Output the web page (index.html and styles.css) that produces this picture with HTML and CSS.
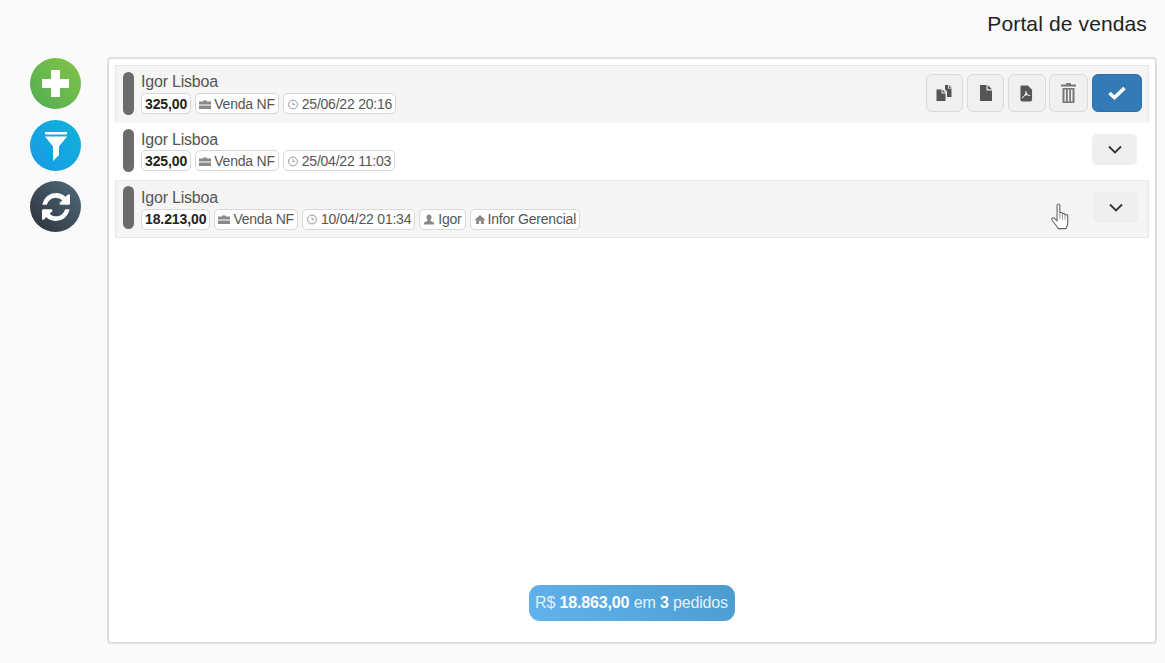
FILE: index.html
```html
<!DOCTYPE html>
<html lang="pt">
<head>
<meta charset="utf-8">
<title>Portal de vendas</title>
<link rel="stylesheet" href="styles.css">
</head>
<body>
<svg class="sprite" width="0" height="0" aria-hidden="true">
  <symbol id="i-case" viewBox="0 0 12 10"><path d="M4 2V1h4v1h4v3H0V2zM0 6h12v3.500H0z"/></symbol>
  <symbol id="i-clock" viewBox="0 0 12 12"><circle cx="6" cy="6" r="4.800" fill="none" stroke="currentColor" stroke-width="1"/><path d="M6 3.500V6h2" fill="none" stroke="currentColor" stroke-width="1"/></symbol>
  <symbol id="i-user" viewBox="0 0 12 12"><path d="M6 0.500c1.800 0 2.800 1.300 2.800 3.100 0 1.300-.6 2.400-1.300 3 0 .8.300 1 1 1.300 1.500.6 3 1 3 2.100v1.500H.5V10c0-1.100 1.500-1.500 3-2.100.7-.3 1-.5 1-1.300-.7-.6-1.300-1.700-1.300-3C3.200 1.800 4.200.5 6 .5z"/></symbol>
  <symbol id="i-home" viewBox="0 0 12 12"><path d="M6 1 0 6.500h1.800V11h3V7.500h2.400V11h3V6.500H12z"/></symbol>
  <symbol id="i-chevron" viewBox="0 0 14 9"><path d="M1 1.500 7 7.500l6-6" fill="none" stroke="currentColor" stroke-width="1.800"/></symbol>
</svg>

<header class="top">Portal de vendas</header>

<div class="main">
  <nav class="side">
    <button class="fab fab-green" aria-label="Adicionar">
      <svg width="27" height="27" viewBox="0 0 27 27"><path d="M9 0h9v9h9v9h-9v9H9v-9H0V9h9z" fill="#fff"/></svg>
    </button>
    <button class="fab fab-blue" aria-label="Filtrar">
      <svg width="22" height="29" viewBox="0 0 22 29"><path d="M0 0h22v2.500H0zM0 4.500h22l-8 10v8.500l-6 6V14.500z" fill="#fff"/></svg>
    </button>
    <button class="fab fab-dark" aria-label="Atualizar">
      <svg width="28" height="28" viewBox="128 128 1536 1536"><path d="M1639 1056q0 5-1 7-64 268-268 434.500t-478 166.500q-146 0-282.500-55t-243.500-157l-129 129q-19 19-45 19t-45-19-19-45v-448q0-26 19-45t45-19h448q26 0 45 19t19 45-19 45l-137 137q71 66 161 102t187 36q134 0 250-65t186-179q11-17 53-117 8-23 30-23h192q13 0 22.500 9.500t9.500 22.500zm25-800v448q0 26-19 45t-45 19h-448q-26 0-45-19t-19-45 19-45l138-138q-148-137-349-137-134 0-250 65t-186 179q-11 17-53 117-8 23-30 23h-199q-13 0-22.500-9.500t-9.500-22.500v-7q65-268 270-434.500t480-166.500q146 0 284 55.500t245 156.500l130-129q19-19 45-19t45 19 19 45z" fill="#fff"/></svg>
    </button>
  </nav>

  <section class="panel">
    <div class="row row-open">
      <span class="bar"></span>
      <div class="info">
        <div class="name">Igor Lisboa</div>
        <div class="tags">
          <span class="tag tag-value">325,00</span>
          <span class="tag"><svg class="ico"><use href="#i-case"/></svg>Venda NF</span>
          <span class="tag"><svg class="ico"><use href="#i-clock"/></svg>25/06/22 20:16</span>
        </div>
      </div>
      <div class="actions">
        <button class="act" aria-label="Duplicar"><svg width="16" height="16" viewBox="0 0 16 16"><path d="M9 0h3v3.500h3.500V12H11V6.500L9 4.500zM0.500 4.500h5V8.500h4V16h-9z" fill="#555"/><path d="M6.500 4.500l3 3h-3zM12.800 0l2.700 2.800h-2.700z" fill="#555"/></svg></button>
        <button class="act" aria-label="Documento"><svg width="14" height="16" viewBox="0 0 14 16"><path d="M1 0h6.500v5.500H13V16H1zM8.700 0 13 4.300H8.700z" fill="#555"/></svg></button>
        <button class="act act-pdf" aria-label="PDF"><svg width="13" height="17" viewBox="0 0 14 17"><path fill-rule="evenodd" d="M2 0h6.500L13 4.500V15a2 2 0 0 1-2 2H2a1.500 1.500 0 0 1-1.500-1.500v-14A1.500 1.500 0 0 1 2 0zm4.500 5.500c.7 2 1 3 2 4.300 1.300 0 2.500.2 2.700 1-.2.700-1.700.5-3.300-.3-1.200.2-2.300.5-3.300 1-.8 1.300-1.600 2.300-2.300 2-.6-.6.500-1.500 2-2.500.6-1 1.300-2.300 1.600-3.500-.3-1-.2-2 .6-2z" fill="#555"/></svg></button>
        <button class="act act-trash" aria-label="Excluir"><svg width="15" height="20" viewBox="0 0 15 20"><path d="M5.500 0h4l.7 1.500H15V3.500H0V1.500h4.800zM1.500 5h12v15h-12zM3.500 6.500v12H5v-12zM6.800 6.500v12h1.500v-12zM10 6.500v12h1.500v-12z" fill="#777" fill-rule="evenodd"/></svg></button>
        <button class="act act-primary" aria-label="Confirmar"><svg width="18" height="14" viewBox="0 0 18 14"><path d="M1.500 7 6.500 11.500 16.500 2" fill="none" stroke="#fff" stroke-width="3.600"/></svg></button>
      </div>
    </div>

    <div class="row row-white">
      <span class="bar"></span>
      <div class="info">
        <div class="name">Igor Lisboa</div>
        <div class="tags">
          <span class="tag tag-value">325,00</span>
          <span class="tag"><svg class="ico"><use href="#i-case"/></svg>Venda NF</span>
          <span class="tag"><svg class="ico"><use href="#i-clock"/></svg>25/04/22 11:03</span>
        </div>
      </div>
      <button class="more more-white" aria-label="Expandir"><svg width="14" height="9"><use href="#i-chevron"/></svg></button>
    </div>

    <div class="row row-last">
      <span class="bar"></span>
      <div class="info">
        <div class="name">Igor Lisboa</div>
        <div class="tags">
          <span class="tag tag-value">18.213,00</span>
          <span class="tag"><svg class="ico"><use href="#i-case"/></svg>Venda NF</span>
          <span class="tag"><svg class="ico"><use href="#i-clock"/></svg>10/04/22 01:34</span>
          <span class="tag"><svg class="ico"><use href="#i-user"/></svg>Igor</span>
          <span class="tag"><svg class="ico ico-home"><use href="#i-home"/></svg>Infor Gerencial</span>
        </div>
      </div>
      <button class="more more-hover" aria-label="Expandir"><svg width="14" height="9"><use href="#i-chevron"/></svg></button>
      <svg class="cursor" width="24" height="29" viewBox="0 0 20 26"><path d="M6.500 2c0-1.500 2.500-1.500 2.500 0v7.500c0-1.300 2.300-1.300 2.300 0v.8c0-1.200 2.300-1.200 2.300 0v.9c0-1.200 2.400-1.100 2.400.3v6.500c0 2.500-1 3.500-1.500 5H7.500c-.7-2-3-4-5.500-7.500-1-1.500.7-2.800 2-1.700l2.500 2.200z" fill="#fff" stroke="#666" stroke-width="1"/><path d="M9 9.500v5M11.300 10.300v4.700M13.600 11.200v3.800" stroke="#888" stroke-width=".8" fill="none"/></svg>
    </div>

    <div class="summary">R$ <b>18.863,00</b> em <b>3</b> pedidos</div>
  </section>
</div>
</body>
</html>
```

FILE: styles.css
```css
* { box-sizing: border-box; }

html, body { height: 100%; }

body {
  margin: 0;
  background: #fafafa;
  color: #333;
  font-family: "Liberation Sans", Arial, sans-serif;
  font-size: 14px;
  overflow: hidden;
}

.sprite { position: absolute; }

button { padding: 0; font: inherit; cursor: pointer; }

.top {
  height: 57px;
  padding: 12px 18px 0 0;
  text-align: right;
  font-size: 21px;
  line-height: 24px;
  letter-spacing: 0.13px;
  color: #222;
}

.main { display: flex; }

.side {
  width: 107px;
  padding: 1px 0 0 30px;
  display: flex;
  flex-direction: column;
  gap: 10.500px;
}

.fab {
  width: 51px;
  height: 51px;
  border: 0;
  border-radius: 50%;
  display: flex;
  align-items: center;
  justify-content: center;
}

.fab-green { background: linear-gradient(45deg, #4fae50, #84c449); }
.fab-blue { background: linear-gradient(45deg, #1b98e6, #0db4d9); }
.fab-dark { background: linear-gradient(45deg, #2d3138, #4f6b7c); }
.fab-blue svg { margin-top: 2px; }

.panel {
  width: 1050px;
  height: 587px;
  padding: 6px 6px 21px 6px;
  background: #fff;
  border: 2px solid #dfdfdf;
  border-radius: 4px;
  display: flex;
  flex-direction: column;
}

.row {
  position: relative;
  display: flex;
  align-items: center;
  height: 57.500px;
  padding: 0 11px 0 7px;
  flex: none;
}

.row-open, .row-last { background: #f5f5f5; border: 1px solid #e6e6e6; }
.row-open { border-bottom-width: 0; }
.row-white { background: #fff; padding-left: 8px; padding-right: 12px; }
.row-last { border-top-color: #ececec; }

.bar {
  width: 11px;
  height: 43px;
  margin: -2px 7px 0 0;
  border-radius: 6px;
  background: #6b6b6b;
  flex: none;
}

.info { flex: 1; min-width: 0; }

.row-last .info { padding-top: 2px; }

.name {
  font-size: 16px;
  line-height: 18px;
  color: #555;
  letter-spacing: -0.2px;
  margin-top: -1px;
}

.row-white .name { margin-top: 0; }

.tags { display: flex; gap: 4px; margin-top: 2px; }

.row-white .tags { margin-top: 1px; }

.tag {
  display: inline-flex;
  align-items: center;
  height: 21px;
  padding: 0 3px;
  background: #fff;
  border: 1px solid #d8d8d8;
  border-radius: 5px;
  font-size: 14px;
  letter-spacing: -0.22px;
  color: #555;
  white-space: nowrap;
}

.tag-value {
  font-weight: 700;
  color: #222;
  letter-spacing: -0.1px;
}

.ico {
  width: 12px;
  height: 11px;
  margin: 1px 3px 0 0;
  color: #8a8a8a;
  fill: #8a8a8a;
  flex: none;
}

.ico-home { margin-right: 2px; }

.actions { display: flex; gap: 3.750px; margin: -2px -5px 0 0; }

.act {
  width: 37.500px;
  height: 38px;
  display: flex;
  align-items: center;
  justify-content: center;
  background: #f0f0f0;
  border: 1px solid #dadada;
  border-radius: 6px;
}

.act-trash { width: 39px; }

.act-primary {
  width: 50px;
  background: #337ab7;
  border-color: #2e70a9;
}

.more {
  width: 45px;
  height: 31px;
  display: flex;
  align-items: center;
  justify-content: center;
  background: #efefef;
  border: 0;
  border-radius: 5px;
  color: #333;
}

.more-white { margin-top: -3px; }
.more-hover { margin: -2px -1px 0 0; }

.cursor { position: absolute; left: 933px; top: 22px; }

.summary {
  align-self: center;
  margin-top: auto;
  width: 206px;
  height: 36px;
  margin-left: -1px;
  line-height: 35px;
  text-align: center;
  border-radius: 11px;
  background: linear-gradient(45deg, #62b3ee, #4b9bd0);
  color: #e3f1fb;
  font-size: 16px;
  letter-spacing: -0.15px;
  white-space: nowrap;
}

.summary b { color: #fff; }
```
